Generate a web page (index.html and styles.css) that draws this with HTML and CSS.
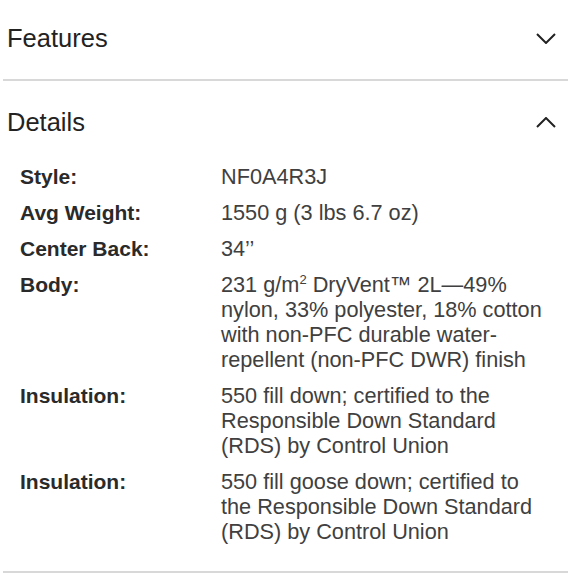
FILE: index.html
```html
<!DOCTYPE html>
<html>
  <head>
    <link rel="stylesheet" href="styles.css">
  </head>
  <body>
    <section class="panel">
      <div class="panel-head">
        <h2>Features</h2>
        <svg class="chev" width="20" height="11" viewBox="0 0 20 11"><path d="M1 1 L10 10 L19 1" /></svg>
      </div>
    </section>

    <section class="panel open">
      <div class="panel-head">
        <h2>Details</h2>
        <svg class="chev" width="20" height="11" viewBox="0 0 20 11"><path d="M1 10 L10 1 L19 10" /></svg>
      </div>
      <dl class="specs">
        <dt>Style:</dt>
        <dd>NF0A4R3J</dd>
        <dt>Avg Weight:</dt>
        <dd>1550 g (3 lbs 6.7 oz)</dd>
        <dt>Center Back:</dt>
        <dd>34’’</dd>
        <dt>Body:</dt>
        <dd>231 g/m<sup>2</sup> DryVent™ 2L—49%<br>nylon, 33% polyester, 18% cotton<br>with non-PFC durable water-<br>repellent (non-PFC DWR) finish</dd>
        <dt>Insulation:</dt>
        <dd>550 fill down; certified to the<br>Responsible Down Standard<br>(RDS) by Control Union</dd>
        <dt>Insulation:</dt>
        <dd>550 fill goose down; certified to<br>the Responsible Down Standard<br>(RDS) by Control Union</dd>
      </dl>
    </section>
  </body>
</html>
```

FILE: styles.css
```css
body {
  margin: 0;
  background-color: #fff;
  font-family: "Liberation Sans", Arial, sans-serif;
  color: #222;
}

.panel {
  margin: 0 12px 0 3px;
  border-bottom: 2px solid #d8d8d8;
}

.panel-head {
  display: flex;
  align-items: center;
  justify-content: space-between;
  padding: 23px 12px 26px 4px;
}

.open .panel-head {
  padding: 26px 12px 0 4px;
}

.panel-head h2 {
  margin: 0;
  font-size: 25.5px;
  font-weight: 400;
  line-height: 30px;
  color: #222;
}

.chev path {
  fill: none;
  stroke: #222;
  stroke-width: 2;
}

.specs {
  display: grid;
  grid-template-columns: 201px 1fr;
  row-gap: 11px;
  margin: 0;
  padding: 27px 0 27px 17px;
}

.specs dt {
  font-size: 21px;
  font-weight: 700;
  line-height: 25px;
  color: #2a2a2a;
}

.specs dd {
  margin: 0;
  font-size: 21.7px;
  line-height: 25px;
  color: #404040;
}

.specs sup {
  font-size: 13px;
  line-height: 0;
  vertical-align: 8px;
}
```
